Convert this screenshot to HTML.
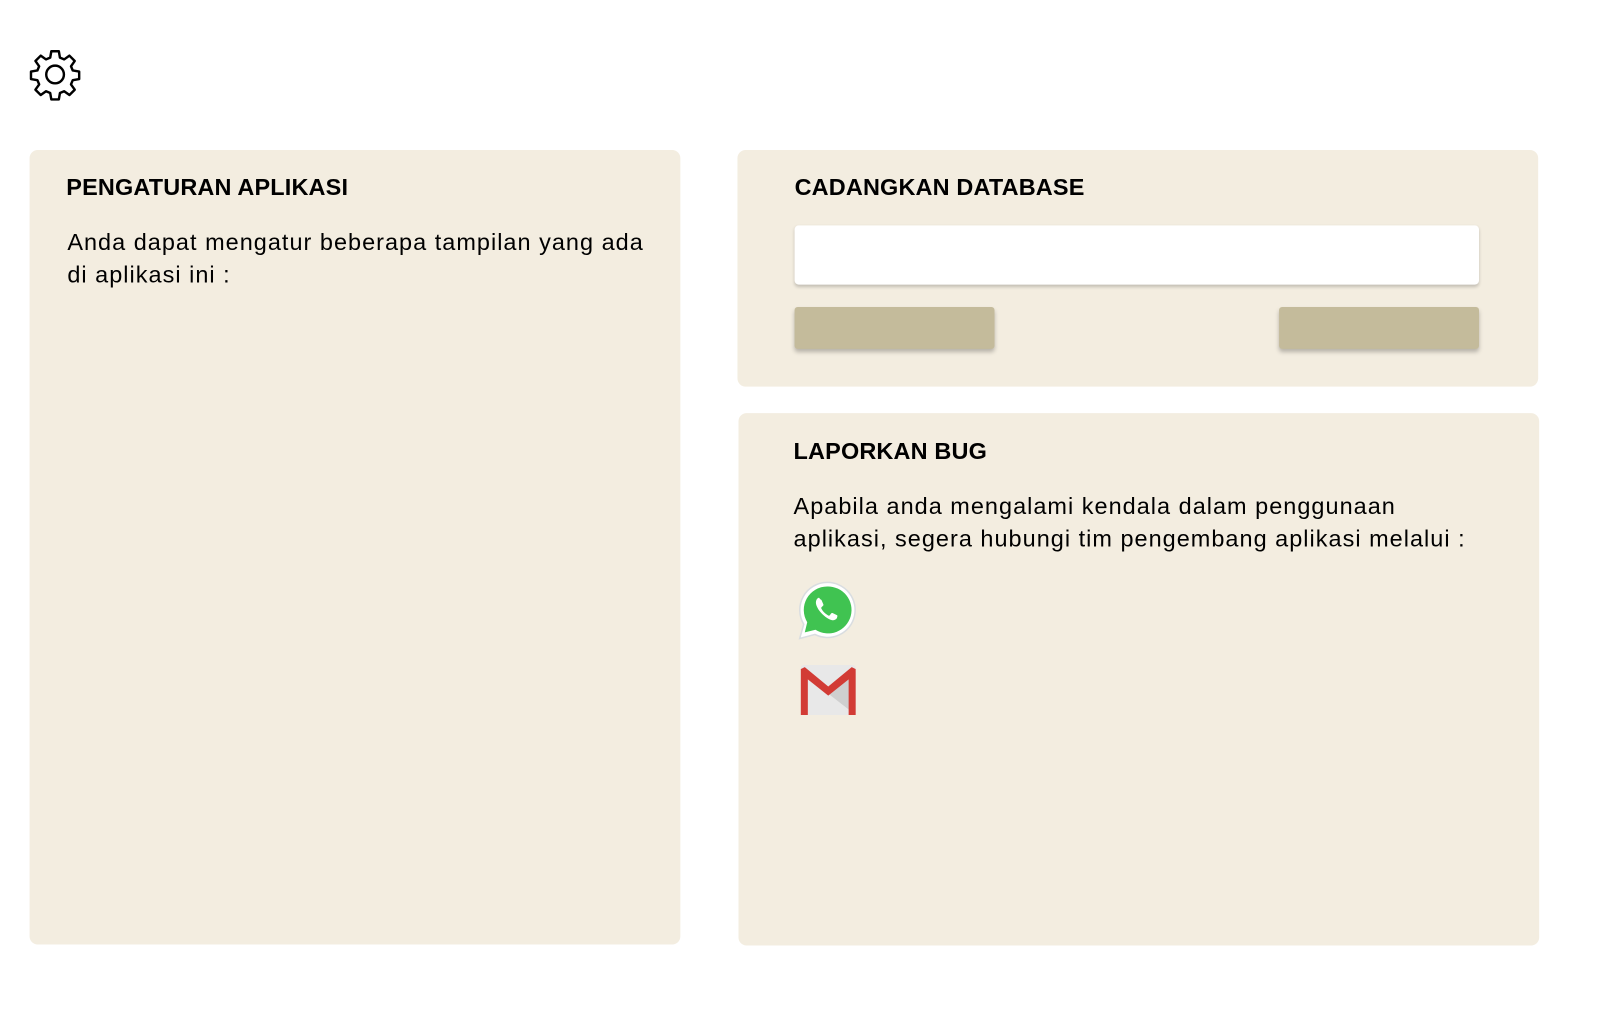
<!DOCTYPE html>
<html><head><meta charset="utf-8"><style>
*{margin:0;padding:0;box-sizing:border-box}
body{width:1600px;height:1010px;background:#fff;font-family:"Liberation Sans",sans-serif;position:relative;overflow:hidden;color:#000}
#w{position:absolute;left:0;top:0;width:1600px;height:1010px;transform:scale(1.02);transform-origin:0 0}
.card{position:absolute;background:#f3ede0;border-radius:8px}
h2{position:absolute;font-size:23px;font-weight:bold;letter-spacing:0.15px}
p{position:absolute;font-size:23px;line-height:32px;letter-spacing:1.0px;white-space:nowrap}
.btn{position:absolute;background:#c4bb9b;border-radius:3px;box-shadow:0 3px 4px rgba(0,0,0,.25);height:41px;width:196px}
</style></head><body><div id="w">
<svg style="position:absolute;left:28px;top:47px" width="52" height="52" viewBox="0 0 24 24" fill="none" stroke="#000" stroke-width="1.1" stroke-linejoin="round">
<path d="M10.3 1.5h3.4l.5 2.9 1.9.8 2.4-1.7 2.4 2.4-1.7 2.4.8 1.9 2.9.5v3.4l-2.9.5-.8 1.9 1.7 2.4-2.4 2.4-2.4-1.7-1.9.8-.5 2.9h-3.4l-.5-2.9-1.9-.8-2.4 1.7-2.4-2.4 1.7-2.4-.8-1.9-2.9-.5v-3.4l2.9-.5.8-1.9-1.7-2.4 2.4-2.4 2.4 1.7 1.9-.8z"/>
<circle cx="12" cy="12" r="4"/></svg>
<div class="card" style="left:29px;top:147px;width:638px;height:779px"></div>
<h2 style="left:65px;top:170px">PENGATURAN APLIKASI</h2>
<p style="left:66px;top:221px">Anda dapat mengatur beberapa tampilan yang ada<br>di aplikasi ini :</p>
<div class="card" style="left:723px;top:147px;width:785px;height:232px"></div>
<h2 style="left:779px;top:170px">CADANGKAN DATABASE</h2>
<div style="position:absolute;left:779px;top:221px;width:671px;height:58px;background:#fff;border-radius:4px;box-shadow:0 2px 3px rgba(0,0,0,.2)"></div>
<div class="btn" style="left:779px;top:301px"></div>
<div class="btn" style="left:1254px;top:301px"></div>
<div class="card" style="left:724px;top:405px;width:785px;height:522px"></div>
<h2 style="left:778px;top:429px">LAPORKAN BUG</h2>
<p style="left:778px;top:480px">Apabila anda mengalami kendala dalam penggunaan<br>aplikasi, segera hubungi tim pengembang aplikasi melalui :</p>
<svg style="position:absolute;left:781px;top:569px" width="60" height="60" viewBox="0 0 60 60">
<path d="M30 2a27 27 0 0 0-23 41L3 57l15-4A27 27 0 1 0 30 2z" fill="#fff" stroke="#d9dde0" stroke-width="1.5"/>
<path d="M30 6a23 23 0 0 0-19.6 35L8 51l10.5-2.6A23 23 0 1 0 30 6z" fill="#40c351"/>
<path d="M22 17c-1 0-2 1-2.5 2-1.5 3 0 7 3 11s8 8 12 9c2 .5 4-.5 5-2l.5-2c0-.5-.3-.8-.8-1l-4-2c-.5-.2-1 0-1.3.3l-1.5 2c-.3.3-.8.4-1.2.2-3-1.5-5.5-4-7-7-.2-.4 0-.8.2-1.1l1.6-1.7c.3-.3.4-.8.2-1.2l-1.7-4c-.2-.5-.6-.8-1.1-.8z" fill="#fff"/>
</svg>
<svg style="position:absolute;left:785px;top:652px" width="54" height="49" viewBox="0 0 54 49">
<rect x="0" y="0" width="54" height="49" rx="3" fill="#e8e8e8"/>
<path d="M54 6L27 28 54 49z" fill="#cfcfcf"/>
<path d="M0 4v45h7V14l20 16 20-16v35h7V4l-4-2L27 21 4 2z" fill="#d23b35"/>
</svg>
</div></body></html>
